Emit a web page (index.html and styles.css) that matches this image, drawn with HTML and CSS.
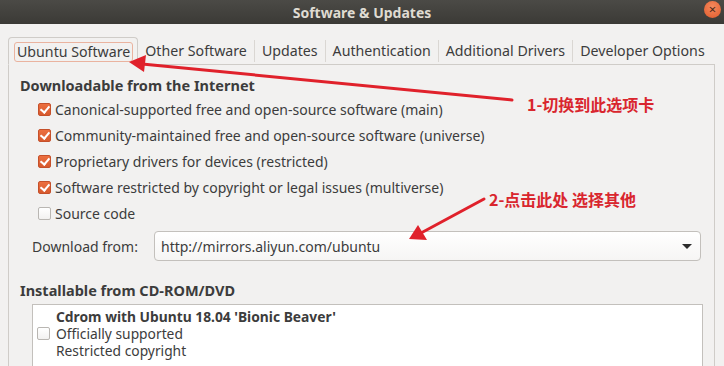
FILE: index.html
```html
<!DOCTYPE html>
<html lang="zh">
<head>
    <meta charset="UTF-8">
    <title>Software &amp; Updates</title>
    <link rel="stylesheet" href="styles.css">
</head>
<body>
    <div class="titlebar">
        <span class="title">Software &amp; Updates</span>
        <span class="close">&#215;</span>
    </div>

    <div class="window">
        <div class="tabs">
            <div class="tab active"><span class="focus">Ubuntu Software</span></div>
            <div class="tab">Other Software</div>
            <div class="tab">Updates</div>
            <div class="tab">Authentication</div>
            <div class="tab">Additional Drivers</div>
            <div class="tab last">Developer Options</div>
        </div>

        <div class="panel">
            <h4 class="section">Downloadable from the Internet</h4>
            <div class="checks">
                <label class="check"><span class="box on"></span>Canonical-supported free and open-source software (main)</label>
                <label class="check"><span class="box on"></span>Community-maintained free and open-source software (universe)</label>
                <label class="check"><span class="box on"></span>Proprietary drivers for devices (restricted)</label>
                <label class="check"><span class="box on"></span>Software restricted by copyright or legal issues (multiverse)</label>
                <label class="check"><span class="box"></span>Source code</label>
            </div>

            <div class="download">
                <span class="download-label">Download from:</span>
                <div class="combo">
                    <span>http://mirrors.aliyun.com/ubuntu</span>
                    <span class="arrow"></span>
                </div>
            </div>

            <h4 class="section cd">Installable from CD-ROM/DVD</h4>
            <div class="listbox">
                <div class="cd-row">
                    <span class="box"></span>
                    <div class="cd-text">
                        <b>Cdrom with Ubuntu 18.04 'Bionic Beaver'</b>
                        <span>Officially supported</span>
                        <span>Restricted copyright</span>
                    </div>
                </div>
            </div>
        </div>
    </div>

    <!-- red annotations drawn over the screenshot -->
    <svg class="notes" width="724" height="366" viewBox="0 0 724 366">
        <line x1="512" y1="100" x2="142" y2="64" stroke="#e0212b" stroke-width="3" stroke-linecap="round"/>
        <polygon points="129,62 146,55 144,72" fill="#e0212b"/>
        <line x1="484" y1="199" x2="421" y2="233" stroke="#e0212b" stroke-width="3" stroke-linecap="round"/>
        <polygon points="409,239 418,225 427,240" fill="#e0212b"/>
    </svg>
    <div class="note note-1">1-切换到此选项卡</div>
    <div class="note note-2">2-点击此处 选择其他</div>
</body>
</html>
```

FILE: styles.css
```css
* {
    margin: 0;
    padding: 0;
    box-sizing: border-box;
}

body {
    width: 724px;
    height: 366px;
    overflow: hidden;
    background-color: #f2f1f0;
    font-family: "Noto Sans", "Open Sans", sans-serif;
    font-size: 14px;
    color: #3c3c3c;
    position: relative;
}

.titlebar {
    height: 24px;
    background: linear-gradient(#4b4a46, #3b3a36);
    display: flex;
    align-items: center;
    justify-content: center;
    position: relative;
}

.title {
    color: #dfdbd2;
    font-weight: bold;
    font-size: 14px;
}

.close {
    position: absolute;
    right: 3px;
    top: 1px;
    width: 17px;
    height: 17px;
    border-radius: 50%;
    background: radial-gradient(circle at 50% 35%, #f58a5e, #e05a2b);
    color: #4a2a1a;
    font-size: 13px;
    line-height: 16px;
    text-align: center;
}

.window {
    padding: 12px 9px 0 8px;
}

.tabs {
    display: flex;
    align-items: flex-end;
    height: 28px;
}

.tab {
    height: 22px;
    line-height: 22px;
    padding: 0 7px;
    border-right: 1px solid #dad7d3;
    color: #3c3c3c;
    font-size: 14.2px;
    margin-bottom: 2px;
    white-space: nowrap;
    flex-shrink: 0;
}

.tab.last {
    border-right: none;
}

.tab.active {
    height: 28px;
    line-height: 18px;
    margin-bottom: -1px;
    padding: 4px 4px 0 5px;
    border: 1px solid #cfccc8;
    border-bottom: 1px solid #f2f1f0;
    border-radius: 4px 4px 0 0;
    background-color: #f2f1f0;
}

.focus {
    display: block;
    height: 20px;
    line-height: 18px;
    padding: 0 2px;
    border: 1px solid #eab39f;
    border-radius: 3px;
}

.panel {
    border: 1px solid #cfccc8;
    border-bottom: none;
    height: 302px;
    padding: 9px 0 0 11px;
}

.section {
    font-size: 14.5px;
    font-weight: bold;
    color: #3c3c3c;
    height: 22px;
    line-height: 22px;
}

.checks {
    display: flex;
    flex-direction: column;
    padding-left: 18px;
}

.check {
    display: flex;
    align-items: center;
    height: 26px;
    gap: 4px;
}

.box {
    width: 13px;
    height: 13px;
    border: 1px solid #b9b6b2;
    border-radius: 2px;
    background: linear-gradient(#ffffff, #f2f1f0);
    flex-shrink: 0;
    position: relative;
}

.box.on {
    border-color: #c5502a;
    background: linear-gradient(#ec6f3f, #d75a2e);
}

.box.on::after {
    content: "";
    position: absolute;
    left: 3px;
    top: 0px;
    width: 4px;
    height: 7px;
    border: solid #ffffff;
    border-width: 0 2px 2px 0;
    transform: rotate(40deg);
}

.download {
    display: flex;
    align-items: center;
    margin-top: 5px;
    height: 30px;
}

.download-label {
    width: 134px;
    padding-left: 12px;
}

.combo {
    width: 547px;
    height: 30px;
    border: 1px solid #c3c0bc;
    border-radius: 4px;
    background: linear-gradient(#ffffff, #f6f5f4);
    display: flex;
    align-items: center;
    justify-content: space-between;
    padding: 0 8px 0 6px;
}

.arrow {
    width: 0;
    height: 0;
    border-left: 5px solid transparent;
    border-right: 5px solid transparent;
    border-top: 5px solid #2c2c2c;
}

.section.cd {
    margin-top: 18px;
}

.listbox {
    margin: 3px 0 0 12px;
    width: 671px;
    height: 63px;
    background-color: #ffffff;
    border: 1px solid #c3c0bc;
    border-bottom: none;
    padding: 3px 0 0 4px;
}

.cd-row {
    display: flex;
    align-items: center;
    gap: 6px;
}

.cd-text {
    display: flex;
    flex-direction: column;
    font-size: 13.8px;
    line-height: 17px;
}

.cd-text b {
    font-weight: bold;
}

.notes {
    position: absolute;
    left: 0;
    top: 0;
    pointer-events: none;
}

.note {
    position: absolute;
    color: #d9262e;
    font-family: "Noto Sans CJK SC", "Noto Sans", sans-serif;
    font-weight: bold;
    font-size: 16px;
    line-height: 20px;
}

.note-1 {
    left: 527px;
    top: 94px;
}

.note-2 {
    left: 489px;
    top: 189px;
}
```
